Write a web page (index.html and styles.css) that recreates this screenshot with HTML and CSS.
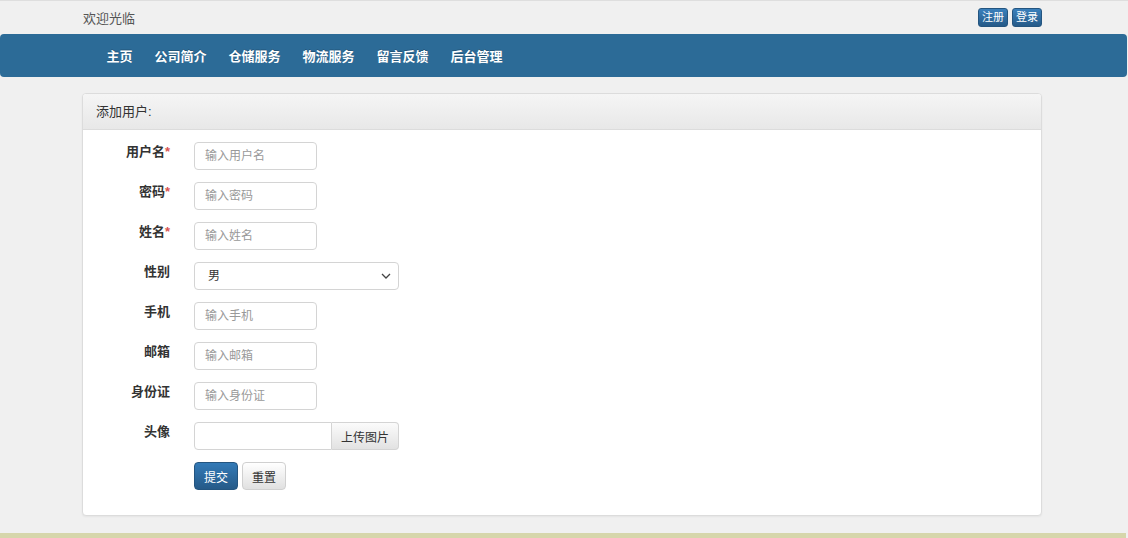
FILE: index.html
```html
<!DOCTYPE html>
<html lang="zh-CN">
<head>
    <meta charset="UTF-8">
    <title>添加用户</title>
    <link rel="stylesheet" href="styles.css">
</head>
<body>
    <div class="topbar">
        <div class="container topbar-inner">
            <span class="welcome">欢迎光临</span>
            <div class="top-actions">
                <a class="btn-mini" href="#">注册</a>
                <a class="btn-mini" href="#">登录</a>
            </div>
        </div>
    </div>

    <div class="navbar">
        <ul class="container nav">
            <li><a href="#">主页</a></li>
            <li><a href="#">公司简介</a></li>
            <li><a href="#">仓储服务</a></li>
            <li><a href="#">物流服务</a></li>
            <li><a href="#">留言反馈</a></li>
            <li><a href="#">后台管理</a></li>
        </ul>
    </div>

    <div class="container panel">
        <div class="panel-heading">添加用户:</div>
        <form class="panel-body">
            <div class="form-row">
                <label class="form-label">用户名<span class="req">*</span></label>
                <input class="form-input" type="text" placeholder="输入用户名">
            </div>
            <div class="form-row">
                <label class="form-label">密码<span class="req">*</span></label>
                <input class="form-input" type="password" placeholder="输入密码">
            </div>
            <div class="form-row">
                <label class="form-label">姓名<span class="req">*</span></label>
                <input class="form-input" type="text" placeholder="输入姓名">
            </div>
            <div class="form-row">
                <label class="form-label">性别</label>
                <div class="select-wrap">
                    <select class="form-select">
                        <option>男</option>
                        <option>女</option>
                    </select>
                    <svg class="select-arrow" width="10" height="6" viewBox="0 0 10 6">
                        <path d="M1 1 L5 5 L9 1" fill="none" stroke="#444" stroke-width="1.3"/>
                    </svg>
                </div>
            </div>
            <div class="form-row">
                <label class="form-label">手机</label>
                <input class="form-input" type="text" placeholder="输入手机">
            </div>
            <div class="form-row">
                <label class="form-label">邮箱</label>
                <input class="form-input" type="text" placeholder="输入邮箱">
            </div>
            <div class="form-row">
                <label class="form-label">身份证</label>
                <input class="form-input" type="text" placeholder="输入身份证">
            </div>
            <div class="form-row">
                <label class="form-label">头像</label>
                <div class="file-group">
                    <input class="file-text" type="text">
                    <button class="file-btn" type="button">上传图片</button>
                </div>
            </div>
            <div class="form-row">
                <span class="form-label"></span>
                <div class="actions">
                    <button class="btn btn-primary" type="button">提交</button>
                    <button class="btn btn-default" type="reset">重置</button>
                </div>
            </div>
        </form>
    </div>

    <div class="footer"></div>
</body>
</html>
```

FILE: styles.css
```css
body {
    margin: 0;
    background: #f0f0f0;
    border-top: 1px solid #dedede;
    font-family: "Liberation Sans", "Noto Sans CJK SC", sans-serif;
    font-size: 13px;
    color: #333;
}
.container {
    width: 960px;
    margin: 0 0 0 calc(50% - 482px);
    box-sizing: border-box;
}
.topbar-inner {
    height: 33px;
    display: flex;
    align-items: center;
    justify-content: space-between;
}
.welcome {
    margin-left: 1px;
    color: #555;
    font-size: 13px;
}
.top-actions {
    display: flex;
    gap: 4px;
}
.btn-mini {
    display: block;
    padding: 2px 3px;
    font-size: 11px;
    line-height: 13px;
    color: #fff;
    text-decoration: none;
    background: linear-gradient(#3a80bc, #265a88);
    border: 1px solid #245580;
    border-radius: 3px;
}
.navbar {
    margin-right: 1px;
    height: 43px;
    background: #2c6b97;
    border-radius: 4px;
}
.nav {
    list-style: none;
    margin-top: 0;
    margin-bottom: 0;
    padding: 0 0 0 14px;
    display: flex;
    height: 43px;
    align-items: center;
}
.nav a {
    display: block;
    padding: 0 11px;
    color: #fff;
    font-weight: bold;
    text-decoration: none;
    text-shadow: 0 -1px 0 rgba(0,0,0,0.2);
}
.panel {
    margin-top: 16px;
    background: #fff;
    border: 1px solid #dcdcdc;
    border-radius: 4px;
    box-shadow: 0 1px 2px rgba(0,0,0,0.05);
    overflow: hidden;
}
.panel-heading {
    height: 35px;
    line-height: 35px;
    padding-left: 13px;
    background: linear-gradient(#f5f5f5, #e8e8e8);
    border-bottom: 1px solid #dcdcdc;
    color: #333;
}
.panel-body {
    padding: 12px 13px 13px 13px;
}
.form-row {
    display: flex;
    align-items: flex-start;
    margin-bottom: 12px;
}
.form-label {
    width: 74px;
    margin-right: 24px;
    padding-top: 1px;
    text-align: right;
    font-weight: bold;
    color: #333;
    line-height: 18px;
}
.req {
    color: #d9534f;
}
.form-input,
.file-text,
.form-select {
    height: 28px;
    box-sizing: border-box;
    border: 1px solid #d4d4d4;
    border-radius: 4px;
    padding: 0 10px;
    font-family: inherit;
    font-size: 12px;
    color: #555;
    background: #fff;
}
.form-input {
    width: 123px;
}
.form-input::placeholder,
.file-text::placeholder {
    color: #999;
}
.select-wrap {
    position: relative;
}
.form-select {
    width: 205px;
    padding-left: 13px;
    appearance: none;
    -webkit-appearance: none;
    color: #333;
}
.select-arrow {
    position: absolute;
    right: 8px;
    top: 11px;
}
.file-group {
    display: flex;
    width: 205px;
}
.file-text {
    width: 138px;
    border-radius: 4px 0 0 4px;
}
.file-btn {
    flex: 1;
    height: 28px;
    font-family: inherit;
    font-size: 12px;
    color: #333;
    padding: 0;
    border: 1px solid #d4d4d4;
    border-left: none;
    border-radius: 0 4px 4px 0;
    background: linear-gradient(#fbfbfb, #e2e2e2);
}
.actions {
    display: flex;
    gap: 4px;
}
.btn {
    height: 28px;
    padding: 0 9px;
    font-family: inherit;
    font-size: 12px;
    border-radius: 4px;
}
.btn-primary {
    color: #fff;
    background: linear-gradient(#337ab7, #265a88);
    border: 1px solid #245580;
}
.btn-default {
    color: #333;
    background: linear-gradient(#fff, #e0e0e0);
    border: 1px solid #d0d0d0;
}
.footer {
    margin-top: 17px;
    margin-right: 2px;
    height: 5px;
    background: #d6d6ab;
}
```
